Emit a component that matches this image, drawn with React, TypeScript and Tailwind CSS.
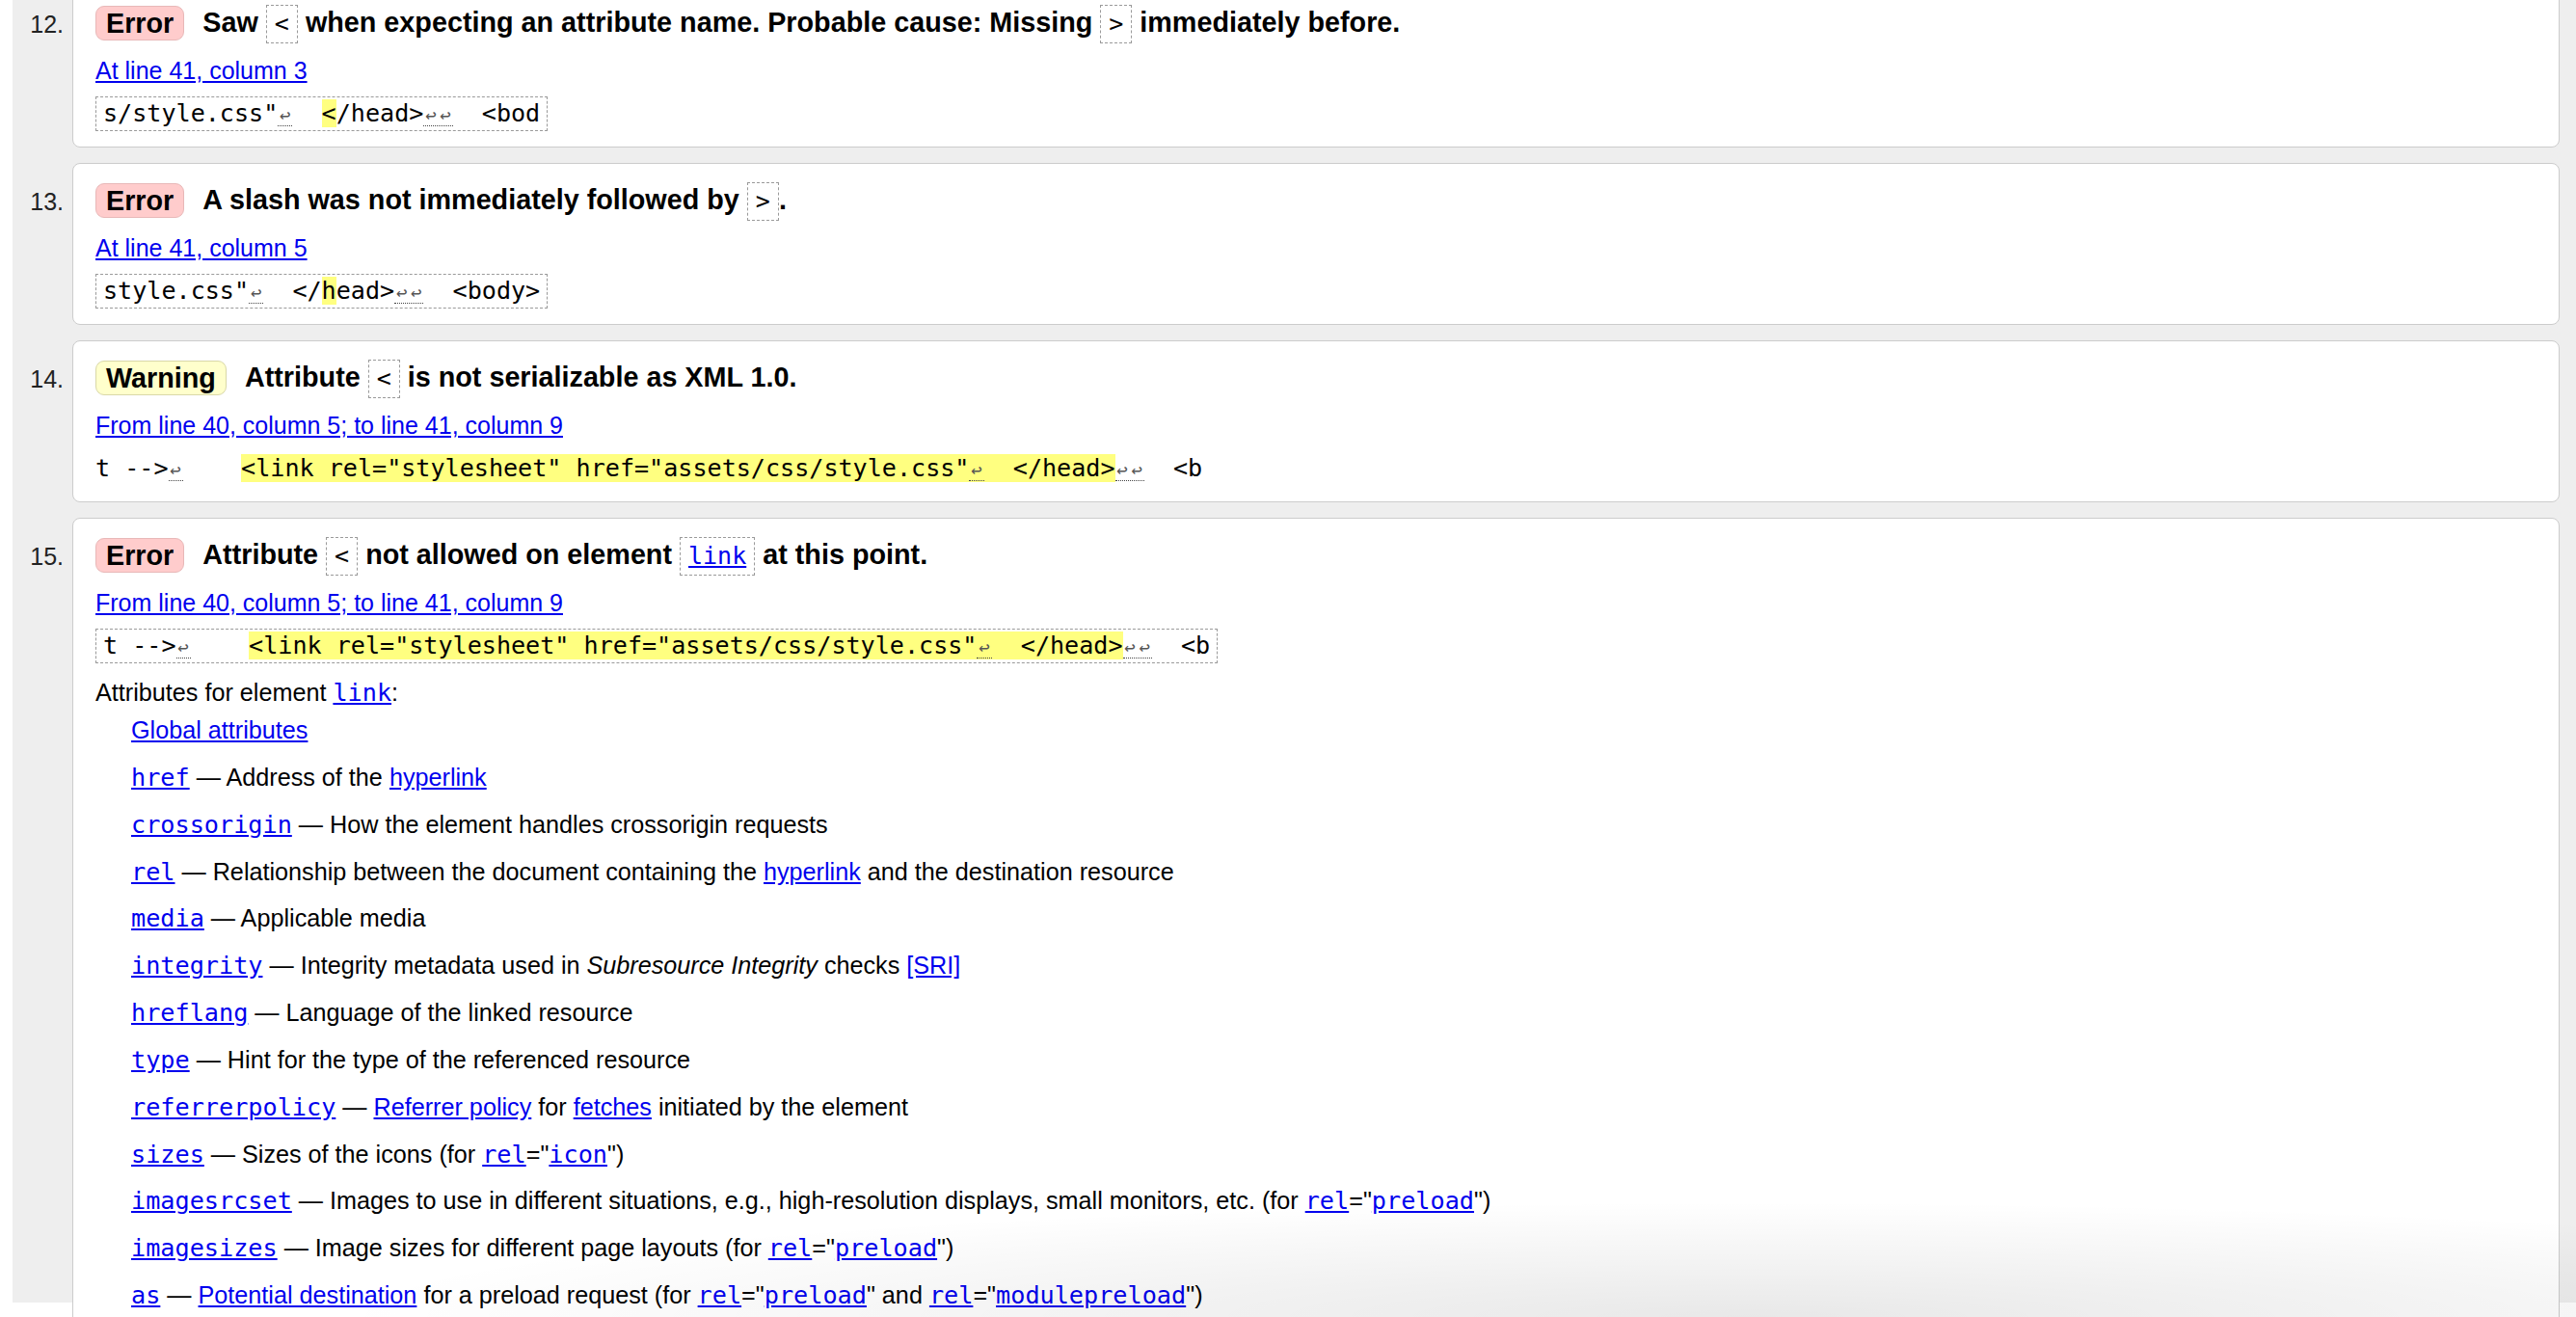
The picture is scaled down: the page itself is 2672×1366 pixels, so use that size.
import React from "react";

const mono = "[font-family:'DejaVu_Sans_Mono',monospace]";
const link = "text-[#0000ee] underline";

function A({ children, code }: { children: React.ReactNode; code?: boolean }) {
  return (
    <a
      href="#"
      className={
        code
          ? "text-[#0000ee] underline leading-none [font-family:'DejaVu_Sans_Mono',monospace]"
          : "text-[#0000ee] underline"
      }
    >
      {children}
    </a>
  );
}

function Badge({ kind }: { kind: "error" | "warning" }) {
  if (kind === "warning") {
    return (
      <span className="inline-block rounded-[9px] border border-[#d9d8a8] bg-[#ffffcc] px-[10px] leading-[34px]">
        Warning
      </span>
    );
  }
  return (
    <span className="inline-block rounded-[9px] border border-[#e8b8b8] bg-[#ffcccc] px-[10px] leading-[34px]">
      Error
    </span>
  );
}

// dashed box used for code tokens inside the message line
function Tok({ children }: { children: React.ReactNode }) {
  return (
    <span className="inline-block border border-dashed border-[#9a9a9a] px-[8px] align-middle text-[25px] font-normal leading-[38px] [font-family:'DejaVu_Sans_Mono',monospace]">
      {children}
    </span>
  );
}

// line-feed marker in the source excerpt
function Lf({ n = 1 }: { n?: number }) {
  return (
    <span className="inline-block border-b border-dotted border-[#444] align-baseline leading-none">
      {Array.from({ length: n }).map((_, i) => (
        <span
          key={i}
          className="inline-block w-[15.1px] text-center text-[19px] leading-none text-[#555]"
        >
          ↩
        </span>
      ))}
    </span>
  );
}

function Hl({ children }: { children: React.ReactNode }) {
  return <b className="bg-[#ffff80] font-normal">{children}</b>;
}

function Card({
  n,
  kind,
  title,
  location,
  excerpt,
  boxed = true,
  children,
}: {
  n: number;
  kind: "error" | "warning";
  title: React.ReactNode;
  location: string;
  excerpt: React.ReactNode;
  boxed?: boolean;
  children?: React.ReactNode;
}) {
  return (
    <li className="flex items-baseline">
      <div className="w-[62px] shrink-0 pr-[9px] text-right text-[25px] text-[#222]">
        {n}.
      </div>
      <div className="min-w-0 flex-1 rounded-[8px] border border-[#cccccc] bg-white pb-[16px] pl-[23px] pr-[23px] pt-[18px]">
        <div className="flex h-[40px] items-center text-[28.75px] font-bold leading-[40px]">
          <Badge kind={kind} />
          <span className="ml-[19px] whitespace-nowrap">{title}</span>
        </div>
        <div className="mt-[14px] text-[25px] leading-[30px]">
          <a href="#" className={link}>
            {location}
          </a>
        </div>
        <div className="mt-[12px]">
          {boxed ? (
            <code
              className={`inline-block whitespace-pre border border-dashed border-[#9a9a9a] px-[7px] text-[25.1px] leading-[34px] ${mono}`}
            >
              {excerpt}
            </code>
          ) : (
            <code className={`inline-block whitespace-pre text-[25.1px] leading-[36px] ${mono}`}>
              {excerpt}
            </code>
          )}
        </div>
        {children}
      </div>
    </li>
  );
}

const linkExcerpt = (
  <>
    {"t -->"}
    <Lf />
    {"    "}
    <Hl>
      {'<link rel="stylesheet" href="assets/css/style.css"'}
      <Lf />
      {"  </head>"}
    </Hl>
    <Lf n={2} />
    {"  <b"}
  </>
);

const attrs: React.ReactNode[] = [
  <A>Global attributes</A>,
  <>
    <A code>href</A> — Address of the <A>hyperlink</A>
  </>,
  <>
    <A code>crossorigin</A> — How the element handles crossorigin requests
  </>,
  <>
    <A code>rel</A> — Relationship between the document containing the <A>hyperlink</A> and the
    destination resource
  </>,
  <>
    <A code>media</A> — Applicable media
  </>,
  <>
    <A code>integrity</A> — Integrity metadata used in <i>Subresource Integrity</i> checks{" "}
    <A>[SRI]</A>
  </>,
  <>
    <A code>hreflang</A> — Language of the linked resource
  </>,
  <>
    <A code>type</A> — Hint for the type of the referenced resource
  </>,
  <>
    <A code>referrerpolicy</A> — <A>Referrer policy</A> for <A>fetches</A> initiated by the element
  </>,
  <>
    <A code>sizes</A> — Sizes of the icons (for <A code>rel</A>="<A code>icon</A>")
  </>,
  <>
    <A code>imagesrcset</A> — Images to use in different situations, e.g., high-resolution displays,
    small monitors, etc. (for <A code>rel</A>="<A code>preload</A>")
  </>,
  <>
    <A code>imagesizes</A> — Image sizes for different page layouts (for <A code>rel</A>="
    <A code>preload</A>")
  </>,
  <>
    <A code>as</A> — <A>Potential destination</A> for a preload request (for <A code>rel</A>="
    <A code>preload</A>" and <A code>rel</A>="<A code>modulepreload</A>")
  </>,
];

export default function App() {
  return (
    <div className="relative h-[1366px] overflow-hidden bg-white pl-[13px] text-black [font-family:'Liberation_Sans',Arial,sans-serif]">
      <div className="h-full bg-[#eeeeee] pr-[17px]">
        <ol className="-mt-[15px] flex flex-col gap-[16px]">
          <Card
            n={12}
            kind="error"
            title={
              <>
                Saw <Tok>&lt;</Tok> when expecting an attribute name. Probable cause: Missing{" "}
                <Tok>&gt;</Tok> immediately before.
              </>
            }
            location="At line 41, column 3"
            excerpt={
              <>
                {'s/style.css"'}
                <Lf />
                {"  "}
                <Hl>&lt;</Hl>
                {"/head>"}
                <Lf n={2} />
                {"  <bod"}
              </>
            }
          />
          <Card
            n={13}
            kind="error"
            title={
              <>
                A slash was not immediately followed by <Tok>&gt;</Tok>.
              </>
            }
            location="At line 41, column 5"
            excerpt={
              <>
                {'style.css"'}
                <Lf />
                {"  </"}
                <Hl>h</Hl>
                {"ead>"}
                <Lf n={2} />
                {"  <body>"}
              </>
            }
          />
          <Card
            n={14}
            kind="warning"
            title={
              <>
                Attribute <Tok>&lt;</Tok> is not serializable as XML 1.0.
              </>
            }
            location="From line 40, column 5; to line 41, column 9"
            excerpt={linkExcerpt}
            boxed={false}
          />
          <Card
            n={15}
            kind="error"
            title={
              <>
                Attribute <Tok>&lt;</Tok> not allowed on element{" "}
                <Tok>
                  <a href="#" className={link}>
                    link
                  </a>
                </Tok>{" "}
                at this point.
              </>
            }
            location="From line 40, column 5; to line 41, column 9"
            excerpt={linkExcerpt}
          >
            <div className="mt-[15px] text-[25.2px] leading-[30px]">
              Attributes for element <A code>link</A>:
            </div>
            <ul className="mt-[9px] flex flex-col gap-[18.85px] pl-[37px] text-[25.2px] leading-[30px]">
              {attrs.map((a, i) => (
                <li key={i}>{a}</li>
              ))}
            </ul>
          </Card>
        </ol>
      </div>
      {/* soft shadow at the bottom edge of the capture */}
      <div className="pointer-events-none absolute inset-x-0 bottom-0 h-[120px] bg-[radial-gradient(ellipse_55%_100%_at_68%_100%,rgba(0,0,0,0.09),rgba(0,0,0,0))]" />
    </div>
  );
}
